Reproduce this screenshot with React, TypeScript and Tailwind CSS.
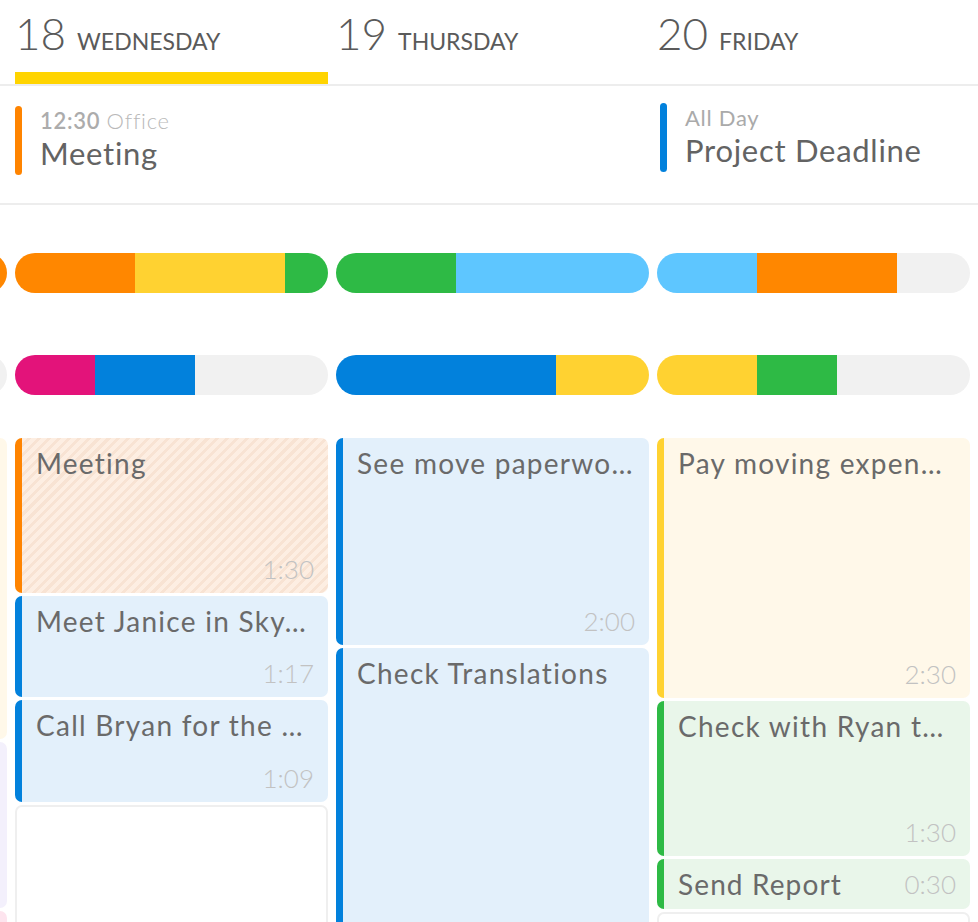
import React from 'react';

interface Segment {
  color: string;
  width: string;
}

interface CardData {
  title?: string;
  duration?: string;
  height: string;
  tone: 'orange' | 'blue' | 'yellow' | 'green' | 'lavender' | 'pink' | 'empty';
  inline?: boolean;
}

interface DayData {
  num: number;
  name: string;
  offscreen?: boolean;
  today?: boolean;
  allDay?: { meta: React.ReactNode; title: string; bar: string; offset: string };
  bars: Segment[][];
  cards: CardData[];
}

const TONES: Record<CardData['tone'], string> = {
  orange:
    'border-l-[7px] border-[#ff8400] bg-[repeating-linear-gradient(135deg,#fdeee2_0px,#fdeee2_4px,#f8e3d3_4px,#f8e3d3_7px)]',
  blue: 'border-l-[7px] border-[#0281dc] bg-[#e3f0fb]',
  yellow: 'border-l-[7px] border-[#ffd231] bg-[#fff8e9]',
  green: 'border-l-[7px] border-[#2eba45] bg-[#e9f6ea]',
  lavender: 'bg-[#f3f0fc]',
  pink: 'bg-[#fde4ee]',
  empty: 'border-2 border-[#efefef] bg-white',
};

const DAYS: DayData[] = [
  {
    // previous day, only its right edge peeks in
    num: 17,
    name: 'Tuesday',
    offscreen: true,
    bars: [
      [
        { color: 'bg-[#2eba45]', width: 'w-[100px]' },
        { color: 'bg-[#0281dc]', width: 'w-[100px]' },
        { color: 'bg-[#ff8700]', width: 'flex-1' },
      ],
      [
        { color: 'bg-[#e3137a]', width: 'w-[80px]' },
        { color: 'bg-[#f1f1f1]', width: 'flex-1' },
      ],
    ],
    cards: [
      { height: 'h-[301px]', tone: 'yellow' },
      { height: 'h-[166px]', tone: 'lavender' },
      { height: 'h-[60px]', tone: 'pink' },
    ],
  },
  {
    num: 18,
    name: 'Wednesday',
    today: true,
    allDay: {
      meta: (
        <>
          <span className="font-semibold text-[#acacac]">12:30</span>{' '}
          <span className="font-light text-[#b9b9b9]">Office</span>
        </>
      ),
      title: 'Meeting',
      bar: 'bg-[#ff8400]',
      offset: 'pt-[20px] pl-0',
    },
    bars: [
      [
        { color: 'bg-[#ff8700]', width: 'w-[120px]' },
        { color: 'bg-[#ffd231]', width: 'w-[150px]' },
        { color: 'bg-[#2eba45]', width: 'flex-1' },
      ],
      [
        { color: 'bg-[#e3137a]', width: 'w-[80px]' },
        { color: 'bg-[#0281dc]', width: 'w-[100px]' },
        { color: 'bg-[#f1f1f1]', width: 'flex-1' },
      ],
    ],
    cards: [
      { title: 'Meeting', duration: '1:30', height: 'h-[155px]', tone: 'orange' },
      { title: 'Meet Janice in Sky…', duration: '1:17', height: 'h-[101px]', tone: 'blue' },
      { title: 'Call Bryan for the …', duration: '1:09', height: 'h-[102px]', tone: 'blue' },
      { height: 'h-[200px]', tone: 'empty' },
    ],
  },
  {
    num: 19,
    name: 'Thursday',
    bars: [
      [
        { color: 'bg-[#2eba45]', width: 'w-[120px]' },
        { color: 'bg-[#5ec6ff]', width: 'flex-1' },
      ],
      [
        { color: 'bg-[#0281dc]', width: 'w-[220px]' },
        { color: 'bg-[#ffd231]', width: 'flex-1' },
      ],
    ],
    cards: [
      { title: 'See move paperwo…', duration: '2:00', height: 'h-[207px]', tone: 'blue' },
      { title: 'Check Translations', height: 'h-[300px]', tone: 'blue' },
    ],
  },
  {
    num: 20,
    name: 'Friday',
    allDay: {
      meta: <span className="text-[#aaaaaa]">All Day</span>,
      title: 'Project Deadline',
      bar: 'bg-[#0281dc]',
      offset: 'pt-[17px] pl-[3px]',
    },
    bars: [
      [
        { color: 'bg-[#5ec6ff]', width: 'w-[100px]' },
        { color: 'bg-[#ff8700]', width: 'w-[140px]' },
        { color: 'bg-[#f1f1f1]', width: 'flex-1' },
      ],
      [
        { color: 'bg-[#ffd231]', width: 'w-[100px]' },
        { color: 'bg-[#2eba45]', width: 'w-[80px]' },
        { color: 'bg-[#f1f1f1]', width: 'flex-1' },
      ],
    ],
    cards: [
      { title: 'Pay moving expen…', duration: '2:30', height: 'h-[260px]', tone: 'yellow' },
      { title: 'Check with Ryan t…', duration: '1:30', height: 'h-[155px]', tone: 'green' },
      { title: 'Send Report', duration: '0:30', height: 'h-[50px]', tone: 'green', inline: true },
      { height: 'h-[60px]', tone: 'empty' },
    ],
  },
];

function EventCard({ card }: { card: CardData }) {
  if (card.inline) {
    return (
      <div
        className={`flex shrink-0 items-center justify-between rounded-[7px] pl-[14px] pr-[14px] ${card.height} ${TONES[card.tone]}`}
      >
        <span className="truncate text-[28px] leading-[34px] tracking-[0.04em] text-[#6a6a6a]">
          {card.title}
        </span>
        <span className="text-[26px] font-light leading-[30px] text-[#c2c2c2]">{card.duration}</span>
      </div>
    );
  }

  return (
    <div
      className={`flex shrink-0 flex-col justify-between rounded-[7px] pb-[9px] pl-[14px] pr-[14px] pt-[8px] ${card.height} ${TONES[card.tone]}`}
    >
      <div className="truncate text-[28px] leading-[34px] tracking-[0.045em] text-[#6a6a6a]">
        {card.title}
      </div>
      {card.duration && (
        <div className="text-right text-[26px] font-light leading-[30px] text-[#c2c2c2]">
          {card.duration}
        </div>
      )}
    </div>
  );
}

export default function App() {
  return (
    <div className="h-[922px] w-[978px] overflow-hidden bg-white font-[Lato,'Liberation_Sans',sans-serif] text-[#666666]">
      <div className="-ml-[306px]">
        {/* day headers */}
        <div className="flex gap-2">
          {DAYS.map((day) => (
            <div key={day.num} className="flex h-[84px] w-[313px] shrink-0 flex-col justify-between">
              {day.offscreen ? (
                <div />
              ) : (
                <div className="flex items-baseline pt-[11px] text-[#5a5a5a]">
                  <span className="text-[44px] font-light leading-none">{day.num}</span>
                  <span className="ml-[11px] text-[23px] uppercase leading-none">{day.name}</span>
                </div>
              )}
              {day.today && <div className="h-3 bg-[#ffd400]" />}
            </div>
          ))}
        </div>
        <div className="h-[2px] bg-[#ededed]" />

        {/* all-day events */}
        <div className="flex h-[117px] gap-2">
          {DAYS.map((day) => (
            <div key={day.num} className={`w-[313px] shrink-0 ${day.allDay?.offset ?? ''}`}>
              {day.allDay && (
                <div className="flex gap-[18px]">
                  <div className={`h-[69px] w-[7px] rounded-full ${day.allDay.bar}`} />
                  <div className="pt-[2px] tracking-[0.045em]">
                    <div className="text-[22px] leading-[26px]">{day.allDay.meta}</div>
                    <div className="text-[31px] leading-[38px] text-[#636363]">{day.allDay.title}</div>
                  </div>
                </div>
              )}
            </div>
          ))}
        </div>
        <div className="h-[2px] bg-[#ededed]" />

        {/* load bars */}
        <div className="flex flex-col gap-[62px] pt-[48px]">
          {[0, 1].map((row) => (
            <div key={row} className="flex gap-2">
              {DAYS.map((day) => (
                <div key={day.num} className="flex h-10 w-[313px] shrink-0 overflow-hidden rounded-full">
                  {day.bars[row].map((seg, i) => (
                    <div key={i} className={`${seg.color} ${seg.width}`} />
                  ))}
                </div>
              ))}
            </div>
          ))}
        </div>

        {/* timed events */}
        <div className="mt-[43px] flex gap-2">
          {DAYS.map((day) => (
            <div key={day.num} className="flex w-[313px] shrink-0 flex-col gap-[3px]">
              {day.cards.map((card, i) => (
                <EventCard key={i} card={card} />
              ))}
            </div>
          ))}
        </div>
      </div>
    </div>
  );
}
